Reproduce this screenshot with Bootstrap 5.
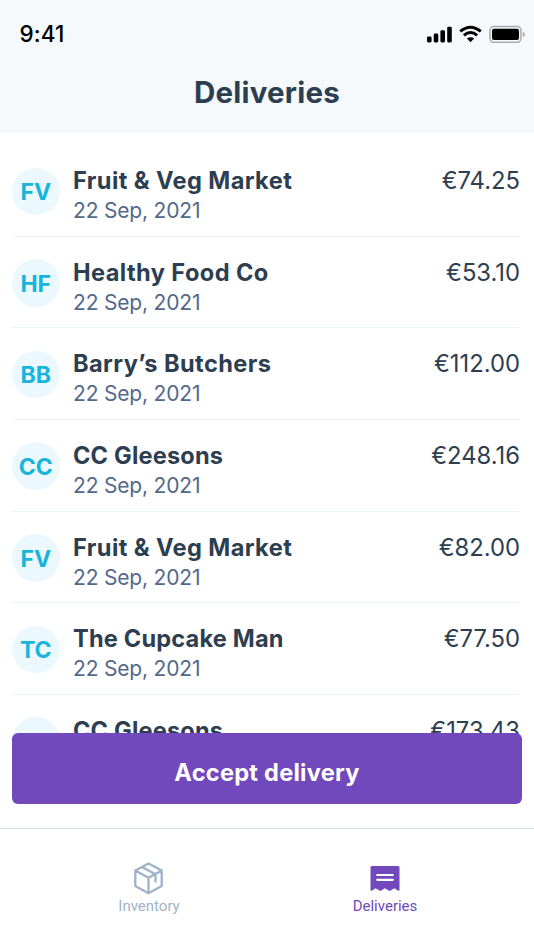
<!DOCTYPE html>
<html lang="en">
<head>
<meta charset="utf-8">
<meta name="viewport" content="width=device-width, initial-scale=1">
<title>Deliveries</title>
<link href="https://cdn.jsdelivr.net/npm/bootstrap@5.3.0/dist/css/bootstrap.min.css" rel="stylesheet">
<style>
body{font-family:Inter,"Liberation Sans",sans-serif;color:#2d3e50;background:#fff}
.screen{height:950px}
.top-area{height:133px;background:#f5f9fc}
.status{height:68px;padding:0 9px 0 19.5px;color:#000}
.clock{font-size:22.5px;font-weight:500;line-height:1;letter-spacing:.1px}
.page-title{font-size:29.5px;font-weight:700;line-height:49px;letter-spacing:.2px}
.deliveries{padding:12px 14px 0 12px}
.delivery{height:91.67px;border-bottom:1.5px solid #edf5fa;padding-top:22px}
.delivery:last-child{border-bottom:0}
.initials{width:47.5px;height:47.5px;margin:.5px 13.5px 0 0;padding-top:2px;background:#ebf9fe;color:#19b4dc;font-size:23px;font-weight:700}
.supplier{font-size:23.6px;font-weight:700;line-height:28px;letter-spacing:.4px}
.supplier.snug{letter-spacing:.17px}
.date{font-size:21px;line-height:28px;color:#52698a;margin-top:2px;letter-spacing:-.18px}
.price{font-size:23.8px;line-height:28px}
.accept{left:12px;right:12px;bottom:24px;height:71px;border-radius:6px;background:#7149bc;color:#fff;font-size:23.6px;font-weight:700;letter-spacing:.24px}
.tabs{height:122px;border-top:1.5px solid #d3e0ec;font-family:Roboto,sans-serif;font-size:15px;line-height:18px;padding:32px 31px 0 31px}
.tab{color:#9fb3c8}
.tab.active{color:#7149bc}
.tab svg{margin-bottom:2px}
</style>
</head>
<body>
<div class="screen d-flex flex-column overflow-hidden">
  <header class="top-area flex-shrink-0">
    <div class="status d-flex align-items-center justify-content-between">
      <span class="clock">9:41</span>
      <svg width="98" height="18" viewBox="0 0 98 18" aria-hidden="true">
        <rect x="0" y="11.5" width="4.6" height="6" rx="1.4"/><rect x="6.7" y="8.5" width="4.6" height="9" rx="1.4"/><rect x="13.4" y="5.2" width="4.6" height="12.3" rx="1.4"/><rect x="20.2" y="1.7" width="4.6" height="15.8" rx="1.4"/>
        <g fill="none" stroke="#000" stroke-width="3"><path d="M33.2 6.4Q43.5-2 53.8 6.4"/><path d="M36.9 10.3Q43.5 4.7 50.1 10.3"/></g>
        <path d="M39.9 13.5Q43.5 10.8 47.1 13.5L43.5 17.2Z"/>
        <rect x="63" y="1.5" width="31" height="15.800" rx="4" fill="none" stroke="#a9acae" stroke-width="1.5"/>
        <rect x="65" y="3.7" width="27" height="11.3" rx="2"/>
        <path d="M95.8 6.8Q98 7.5 98 9.4T95.8 12Z" fill="#a9acae"/>
      </svg>
    </div>
    <h1 class="page-title text-center m-0">Deliveries</h1>
  </header>
  <main class="position-relative flex-grow-1 overflow-hidden">
    <ul class="deliveries list-unstyled m-0">
      <li class="delivery d-flex"><span class="initials rounded-circle d-flex align-items-center justify-content-center">FV</span><div class="flex-grow-1"><div class="supplier">Fruit &amp; Veg Market</div><div class="date">22 Sep, 2021</div></div><span class="price">€74.25</span></li>
      <li class="delivery d-flex"><span class="initials rounded-circle d-flex align-items-center justify-content-center">HF</span><div class="flex-grow-1"><div class="supplier">Healthy Food Co</div><div class="date">22 Sep, 2021</div></div><span class="price">€53.10</span></li>
      <li class="delivery d-flex"><span class="initials rounded-circle d-flex align-items-center justify-content-center">BB</span><div class="flex-grow-1"><div class="supplier">Barry’s Butchers</div><div class="date">22 Sep, 2021</div></div><span class="price">€112.00</span></li>
      <li class="delivery d-flex"><span class="initials rounded-circle d-flex align-items-center justify-content-center">CC</span><div class="flex-grow-1"><div class="supplier snug">CC Gleesons</div><div class="date">22 Sep, 2021</div></div><span class="price">€248.16</span></li>
      <li class="delivery d-flex"><span class="initials rounded-circle d-flex align-items-center justify-content-center">FV</span><div class="flex-grow-1"><div class="supplier">Fruit &amp; Veg Market</div><div class="date">22 Sep, 2021</div></div><span class="price">€82.00</span></li>
      <li class="delivery d-flex"><span class="initials rounded-circle d-flex align-items-center justify-content-center">TC</span><div class="flex-grow-1"><div class="supplier snug">The Cupcake Man</div><div class="date">22 Sep, 2021</div></div><span class="price">€77.50</span></li>
      <li class="delivery d-flex"><span class="initials rounded-circle"></span><div class="flex-grow-1"><div class="supplier snug">CC Gleesons</div></div><span class="price">€173.43</span></li>
    </ul>
    <button class="accept btn position-absolute border-0 p-0 pt-2" type="button">Accept delivery</button>
  </main>
  <nav class="tabs d-flex flex-shrink-0">
    <a class="tab w-50 d-flex flex-column align-items-center text-decoration-none" href="#">
      <svg width="34" height="34" viewBox="0 0 34 34" fill="none" stroke="currentColor" stroke-width="2.3" stroke-linejoin="round" stroke-linecap="round" aria-hidden="true"><path d="M16.5 2.4 29.7 9.5V25L16.5 32.2 3.3 25V9.5ZM3.3 9.5l13.2 7.2 13.2-7.2M16.5 16.7V32M10 6l13.500 7.300v7.200"/></svg>
      <span>Inventory</span>
    </a>
    <a class="tab active w-50 d-flex flex-column align-items-center text-decoration-none" href="#" aria-current="page">
      <svg width="34" height="34" viewBox="0 0 34 34" aria-hidden="true"><path fill="currentColor" d="M4 5h26q1.500 0 1.500 1.500V29.500l-1.300.3-3.800-2.600-4.700 2.800-4.700-2.800-4.700 2.800-4.700-2.800-3.800 2.600-1.300-.3V6.500Q2.500 5 4 5Z"/><path d="M9.200 14h15.600M9.200 18.800h15.600" stroke="#fff" stroke-width="2.200" stroke-linecap="round"/></svg>
      <span>Deliveries</span>
    </a>
  </nav>
</div>
<script src="https://cdn.jsdelivr.net/npm/bootstrap@5.3.0/dist/js/bootstrap.bundle.min.js"></script>
</body>
</html>
